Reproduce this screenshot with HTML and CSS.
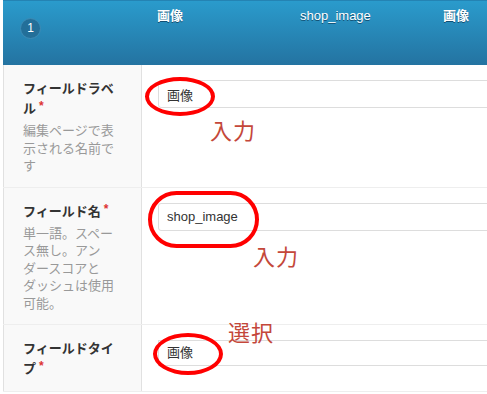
FILE: index.html
```html
<!DOCTYPE html>
<html lang="ja">
<head>
    <meta charset="UTF-8">
    <title>フィールド設定</title>
    <link rel="stylesheet" href="styles.css">
</head>
<body>
<div class="fields">
    <!-- フィールド一覧の見出し -->
    <div class="field-head">
        <div class="col-order"><span class="badge">1</span></div>
        <div class="col">画像</div>
        <div class="col">shop_image</div>
        <div class="col">画像</div>
    </div>

    <div class="field-row">
        <div class="field-label">
            <label>フィールドラベル<span class="req">*</span></label>
            <p class="desc">編集ページで表示される名前です</p>
        </div>
        <div class="field-input">
            <input class="text" type="text" value="画像">
            <span class="mark mark-label"></span>
            <span class="note note-label">入力</span>
        </div>
    </div>

    <div class="field-row">
        <div class="field-label">
            <label>フィールド名<span class="req">*</span></label>
            <p class="desc">単一語。スペース無し。アンダースコアとダッシュは使用可能。</p>
        </div>
        <div class="field-input">
            <input class="text" type="text" value="shop_image">
            <span class="mark mark-name"></span>
            <span class="note note-name">入力</span>
        </div>
    </div>

    <div class="field-row">
        <div class="field-label">
            <label>フィールドタイプ<span class="req">*</span></label>
        </div>
        <div class="field-input">
            <div class="text select">画像</div>
            <span class="mark mark-type"></span>
            <span class="note note-type">選択</span>
        </div>
    </div>
</div>
</body>
</html>
```

FILE: styles.css
```css
* {
    margin: 0;
    padding: 0;
    box-sizing: border-box;
}

html, body {
    overflow: hidden;
}

body {
    width: 487px;
    height: 394px;
    background: #fff;
    font: 13px/20px "Liberation Sans", "Noto Sans CJK JP", sans-serif;
    color: #333;
}

.fields {
    width: 640px;
    margin-left: 3px;
}

/*見出し部分*/
.field-head {
    display: flex;
    height: 65px;
    background: linear-gradient(#2a9bcc, #2473a1);
    border-top: 1px solid #2483b3;
    color: #fff;
    text-shadow: 0 1px 0 #124f73;
}

.col-order {
    width: 154px;
    padding: 17px 0 0 17px;
}

.col {
    width: 143px;
    padding-top: 5px;
    font-weight: bold;
}

.col:nth-child(3) {
    font-weight: normal;
}

.badge {
    display: block;
    width: 21px;
    height: 21px;
    border-radius: 50%;
    background: #236f99;
    border: 1px solid #3d8cb6;
    font: 12px/19px "Liberation Sans", sans-serif;
    text-align: center;
    text-shadow: none;
}

/*各設定行*/
.field-row {
    display: flex;
    border-bottom: 1px solid #eeeeee;
}

.field-label {
    width: 139px;
    padding: 14px 20px 12px 19px;
    background: #f9f9f9;
    border-left: 1px solid #e1e1e1;
    border-right: 1px solid #e1e1e1;
    line-break: strict;
}

.field-label label {
    display: block;
    font-weight: bold;
    color: #333;
}

.req {
    color: #dd3333;
    font-size: 12px;
    line-height: 12px;
    vertical-align: 3px;
    margin-left: 3px;
}

.desc {
    margin-top: 3px;
    line-height: 17.5px;
    color: #999;
}

.field-input {
    position: relative;
    flex: 1;
    padding: 15px 0 15px 16px;
}

.text {
    display: block;
    width: 100%;
    height: 28px;
    padding: 0 8px;
    border: 1px solid #dddddd;
    border-radius: 3px;
    background: #fff;
    font: 13px/26px "Liberation Sans", "Noto Sans CJK JP", sans-serif;
    color: #333;
    outline: none;
}

.select {
    height: 26px;
    line-height: 24px;
    border-radius: 0;
}

/*赤い丸の注釈*/
.mark {
    position: absolute;
    border: 4px solid #ff0000;
    border-radius: 50%;
}

.mark-label {
    left: 3px;
    top: 12px;
    width: 70px;
    height: 39px;
}

.mark-name {
    left: 6px;
    top: 3px;
    width: 111px;
    height: 57px;
    border-radius: 29px;
}

.mark-type {
    left: 11px;
    top: 8px;
    width: 70px;
    height: 42px;
}

.note {
    position: absolute;
    font: 22px/24px "Noto Sans CJK JP", serif;
    color: #c4473a;
    letter-spacing: 1px;
}

.note-label {
    left: 68px;
    top: 52px;
}

.note-name {
    left: 111px;
    top: 55px;
}

.note-type {
    left: 86px;
    top: -6px;
}
```
